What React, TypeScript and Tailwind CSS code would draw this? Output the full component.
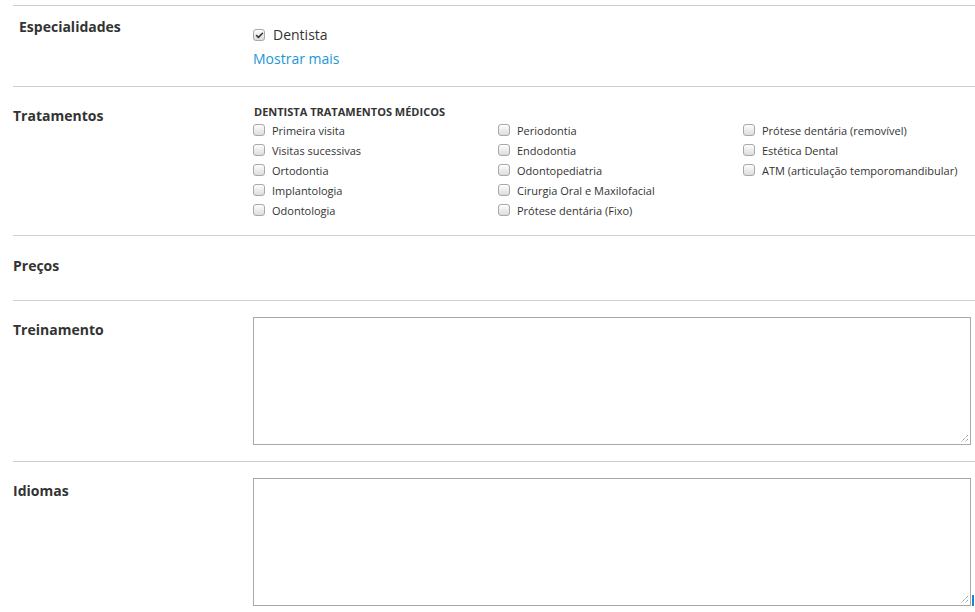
import { Check } from "lucide-react"

const columns: string[][] = [
  ["Primeira visita", "Visitas sucessivas", "Ortodontia", "Implantologia", "Odontologia"],
  ["Periodontia", "Endodontia", "Odontopediatria", "Cirurgia Oral e Maxilofacial", "Prótese dentária (Fixo)"],
  ["Prótese dentária (removível)", "Estética Dental", "ATM (articulação temporomandibular)"],
]

function Box({ checked = false }: { checked?: boolean }) {
  return (
    <span className="w-[12px] h-[12px] shrink-0 rounded-[3px] border border-[#a9a9a9] bg-gradient-to-b from-[#fdfdfd] to-[#dcdcdc] flex items-center justify-center">
      {checked && <Check size={9} strokeWidth={4} className="text-[#333]" />}
    </span>
  )
}

function Resizer() {
  return (
    <svg width="9" height="9" viewBox="0 0 9 9" className="absolute right-[1px] bottom-[1px]">
      <path d="M8 1 L1 8 M8 5 L5 8" stroke="#777" strokeWidth="1" strokeDasharray="1 1" />
    </svg>
  )
}

function Area() {
  return (
    <div className="relative w-[718px] h-[128px] border border-[#a9a9a9] bg-white">
      <Resizer />
    </div>
  )
}

export default function App() {
  return (
    <div
      className="w-[975px] h-[612px] overflow-hidden bg-white text-[#333] pl-[13px] pt-[5px]"
      style={{ fontFamily: "'Open Sans', 'Noto Sans', sans-serif" }}
    >
      <section className="border-t border-[#cfcfcf] flex h-[81px]">
        <h3 className="w-[240px] shrink-0 pl-[6px] pt-[12px] text-[14px] font-bold leading-[18px]">Especialidades</h3>
        <div className="pt-[20px]">
          <label className="flex items-center gap-[8px] text-[14px] leading-[18px]">
            <Box checked />
            Dentista
          </label>
          <a className="block mt-[6px] text-[14px] leading-[18px] text-[#1a97d5]">Mostrar mais</a>
        </div>
      </section>

      <section className="border-t border-[#cfcfcf] flex h-[149px]">
        <h3 className="w-[240px] shrink-0 pt-[20px] text-[14px] font-bold leading-[18px]">Tratamentos</h3>
        <div className="pt-[18px]">
          <p className="text-[11px] font-bold leading-[14px] uppercase pl-[1px]">Dentista tratamentos médicos</p>
          <div className="flex mt-[1px]">
            {columns.map((col, i) => (
              <ul key={i} className="w-[245px]">
                {col.map((t) => (
                  <li key={t} className="flex items-center gap-[7px] h-[20px] text-[11px]">
                    <Box />
                    <span className="mt-[2px]">{t}</span>
                  </li>
                ))}
              </ul>
            ))}
          </div>
        </div>
      </section>

      <section className="border-t border-[#cfcfcf] flex h-[65px]">
        <h3 className="w-[240px] shrink-0 pt-[21px] text-[14px] font-bold leading-[18px]">Preços</h3>
      </section>

      <section className="border-t border-[#cfcfcf] flex h-[161px]">
        <h3 className="w-[240px] shrink-0 pt-[20px] text-[14px] font-bold leading-[18px]">Treinamento</h3>
        <div className="pt-[16px]">
          <Area />
        </div>
      </section>

      <section className="border-t border-[#cfcfcf] flex">
        <h3 className="w-[240px] shrink-0 pt-[20px] text-[14px] font-bold leading-[18px]">Idiomas</h3>
        <div className="pt-[16px] flex items-end gap-[1px]">
          <Area />
          <span className="w-[2px] h-[11px] bg-[#1a87c9]" />
        </div>
      </section>
    </div>
  )
}
